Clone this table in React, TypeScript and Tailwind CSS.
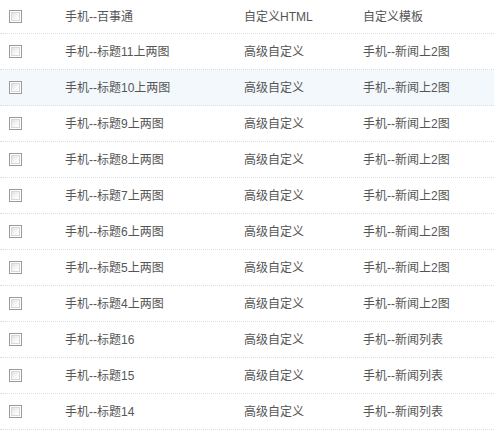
import React from "react";

const rows: { name: string; type: string; tpl: string; hl?: boolean }[] = [
  { name: "手机--百事通", type: "自定义HTML", tpl: "自定义模板" },
  { name: "手机--标题11上两图", type: "高级自定义", tpl: "手机--新闻上2图" },
  { name: "手机--标题10上两图", type: "高级自定义", tpl: "手机--新闻上2图", hl: true },
  { name: "手机--标题9上两图", type: "高级自定义", tpl: "手机--新闻上2图" },
  { name: "手机--标题8上两图", type: "高级自定义", tpl: "手机--新闻上2图" },
  { name: "手机--标题7上两图", type: "高级自定义", tpl: "手机--新闻上2图" },
  { name: "手机--标题6上两图", type: "高级自定义", tpl: "手机--新闻上2图" },
  { name: "手机--标题5上两图", type: "高级自定义", tpl: "手机--新闻上2图" },
  { name: "手机--标题4上两图", type: "高级自定义", tpl: "手机--新闻上2图" },
  { name: "手机--标题16", type: "高级自定义", tpl: "手机--新闻列表" },
  { name: "手机--标题15", type: "高级自定义", tpl: "手机--新闻列表" },
  { name: "手机--标题14", type: "高级自定义", tpl: "手机--新闻列表" },
];

function Check() {
  return (
    <div className="w-[13px] h-[13px] border border-[#9a9a9a] bg-white p-px">
      <div className="w-full h-full bg-gradient-to-br from-[#e2e2e2] via-[#f4f4f4] to-[#ffffff] border border-[#d8d8d8]" />
    </div>
  );
}

export default function App() {
  return (
    <div
      className="w-[494px] h-[434px] overflow-hidden bg-white text-[12px] text-[#555]"
      style={{ fontFamily: '"Liberation Sans", "Noto Sans CJK SC", sans-serif' }}
    >
      {rows.map((r, i) => (
        <div
          key={i}
          className={`flex items-center border-b border-dotted border-[#d6dde3] ${
            i === 0 ? "h-[34px]" : "h-[36px]"
          } ${r.hl ? "bg-[#f2f8fc]" : "bg-white"}`}
        >
          <div className="w-[65px] pl-[9px] shrink-0">
            <Check />
          </div>
          <div className="w-[179px] shrink-0">{r.name}</div>
          <div className="w-[119px] shrink-0">{r.type}</div>
          <div className="flex-1">{r.tpl}</div>
        </div>
      ))}
    </div>
  );
}
